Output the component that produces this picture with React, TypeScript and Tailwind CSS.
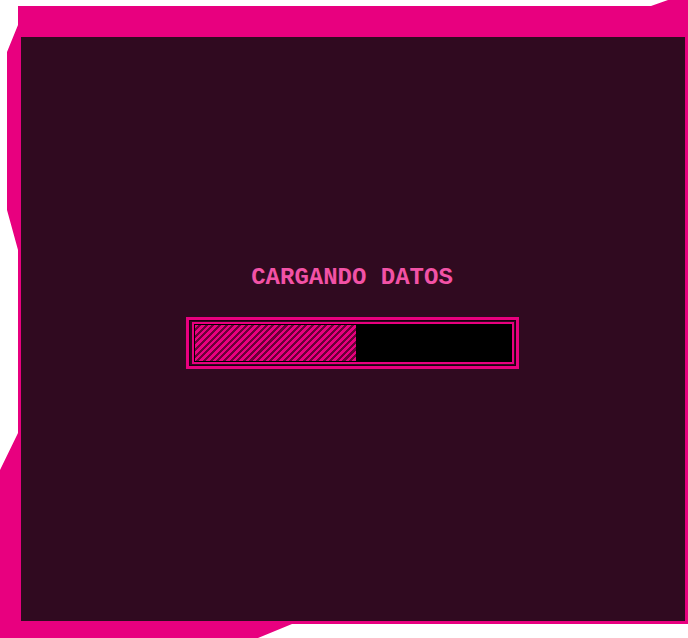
export default function App() {
  const progress = 51;

  return (
    <div className="h-[638px] w-[688px] bg-white">
      <div className="h-full w-full bg-[#e8007f] pb-[17px] pl-[21px] pr-[3px] pt-[37px] [clip-path:polygon(18px_6px,651px_6px,668px_0,100%_0,100%_624px,292px_624px,258px_100%,0_100%,0_470px,18px_433px,18px_250px,7px_210px,7px_52px,18px_25px)]">
        <div className="flex h-full w-full flex-col items-center bg-[#300a20] pr-[2px] pt-[225px]">
          <p className="font-['Liberation_Mono',monospace] text-[24px] font-bold leading-[32px] text-[#f252a6]">
            CARGANDO DATOS
          </p>
          <div className="mt-[23px] w-[333px] border-[3px] border-[#e8007f] p-[3px] pb-[2px] pr-[2px] pt-[2px] shadow-[inset_0_0_0_1px_#1a0010]">
            <div className="h-[42px] w-full border-2 border-[#e8007f] bg-black p-px">
              <div
                className="h-full bg-[repeating-linear-gradient(135deg,#e8007f_0px,#e8007f_2.5px,#6a0038_2.5px,#6a0038_4.7px)]"
                style={{ width: `${progress}%` }}
              />
            </div>
          </div>
        </div>
      </div>
    </div>
  );
}
